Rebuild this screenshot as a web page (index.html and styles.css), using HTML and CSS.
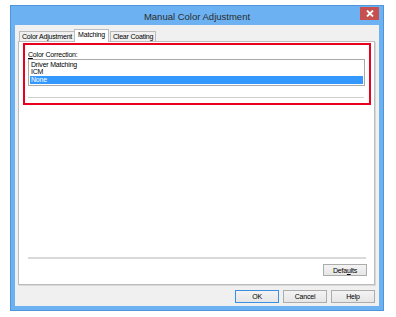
FILE: index.html
```html
<!DOCTYPE html>
<html lang="en">
<head>
  <meta charset="UTF-8">
  <title>Manual Color Adjustment</title>
  <link rel="stylesheet" href="styles.css">
</head>
<body>
  <div class="window">
    <div class="titlebar">
      <span class="title">Manual Color Adjustment</span>
      <button class="close" aria-label="Close">
        <svg width="8" height="7" viewBox="0 0 8 7"><path d="M1 0.5 L7 6.5 M7 0.5 L1 6.5" stroke="#fff" stroke-width="1.8"/></svg>
      </button>
    </div>

    <div class="client">
      <!-- tab strip -->
      <div class="tabs">
        <div class="tab">Color Adjustment</div>
        <div class="tab active">Matching</div>
        <div class="tab">Clear Coating</div>
      </div>

      <div class="panel">
        <div class="highlight">
          <div class="label"><u>C</u>olor Correction:</div>
          <ul class="listbox">
            <li>Driver Matching</li>
            <li>ICM</li>
            <li class="selected">None</li>
          </ul>
          <div class="rule"></div>
        </div>

        <div class="spacer"></div>
        <div class="rule bottom"></div>
        <div class="defaults-row">
          <button class="btn">Defa<u>u</u>lts</button>
        </div>
      </div>

      <div class="actions">
        <button class="btn default">OK</button>
        <button class="btn">Cancel</button>
        <button class="btn">Help</button>
      </div>
    </div>
  </div>
</body>
</html>
```

FILE: styles.css
```css
body {
  margin: 0;
  padding: 5px 0 0 10px;
  background: #fff;
  font-family: "Liberation Sans", Arial, sans-serif;
}
.window {
  border: 1px solid #4f95d8;
  background: #6cb2f2;
  display: flex;
  flex-direction: column;
  padding: 0 4px 4px;
  width: 364px;
  height: 300px;
}
.titlebar {
  height: 19px;
  display: flex;
  align-items: center;
  justify-content: center;
  position: relative;
}
.title {
  font-size: 9.5px;
  color: #2b2b2b;
  margin-top: 1px;
}
.close {
  position: absolute;
  right: 0;
  top: 1px;
  width: 19px;
  height: 13px;
  border: none;
  padding: 0;
  background: #c7504f;
  display: flex;
  align-items: center;
  justify-content: center;
}
.client {
  flex: 1;
  background: #f0f0f0;
  display: flex;
  flex-direction: column;
  padding: 5px 4px 3px 3px;
  font-size: 7px;
  color: #000;
}
.tabs {
  display: flex;
  height: 11px;
  align-items: flex-end;
  padding-left: 1px;
  position: relative;
  z-index: 1;
}
.tab {
  height: 9px;
  line-height: 9px;
  padding: 0 2px;
  border: 1px solid #bcbcbc;
  border-bottom: none;
  background: #f0f0f0;
  margin-right: -1px;
  letter-spacing: -0.2px;
}
.tab.active {
  height: 12px;
  line-height: 10px;
  background: #fff;
  padding: 0 3px;
  margin: 0 1px -1px 0;
  position: relative;
}
.panel {
  flex: 1;
  background: #fff;
  border: 1px solid #bcbcbc;
  box-shadow: 1px 1px 0 #d8d8d8;
  display: flex;
  flex-direction: column;
  padding: 1px 3px 8px 4px;
}
.highlight {
  border: 2px solid #e8001f;
  padding: 5px 4px 5px 3px;
}
.label {
  height: 9px;
  line-height: 9px;
  letter-spacing: -0.2px;
}
.listbox {
  list-style: none;
  margin: 0;
  padding: 1px;
  border: 1px solid #a9a9a9;
  height: 23px;
}
.listbox li {
  height: 7px;
  line-height: 7px;
  padding-left: 1px;
  letter-spacing: -0.2px;
}
.listbox li.selected {
  background: #3399ff;
  color: #fff;
  height: 8px;
  margin-top: 1px;
}
.rule {
  height: 1px;
  background: #d0d0d0;
  margin-top: 11px;
  margin-right: 1px;
}
.spacer {
  flex: 1;
}
.rule.bottom {
  margin: 0 5px;
  height: 2px;
  background: #d9d9d9;
}
.defaults-row {
  display: flex;
  justify-content: flex-end;
  margin-top: 5px;
  padding-right: 4px;
}
.btn {
  width: 44px;
  height: 12px;
  padding: 0;
  font-family: "Liberation Sans", Arial, sans-serif;
  font-size: 7px;
  color: #000;
  background: linear-gradient(#f3f3f3, #e6e6e6);
  border: 1px solid #acacac;
  letter-spacing: -0.2px;
}
.btn.default {
  border-color: #3c8fe0;
}
.actions {
  display: flex;
  justify-content: flex-end;
  gap: 4px;
  margin-top: 5px;
  height: 13px;
}
.actions .btn {
  height: 13px;
}
```
